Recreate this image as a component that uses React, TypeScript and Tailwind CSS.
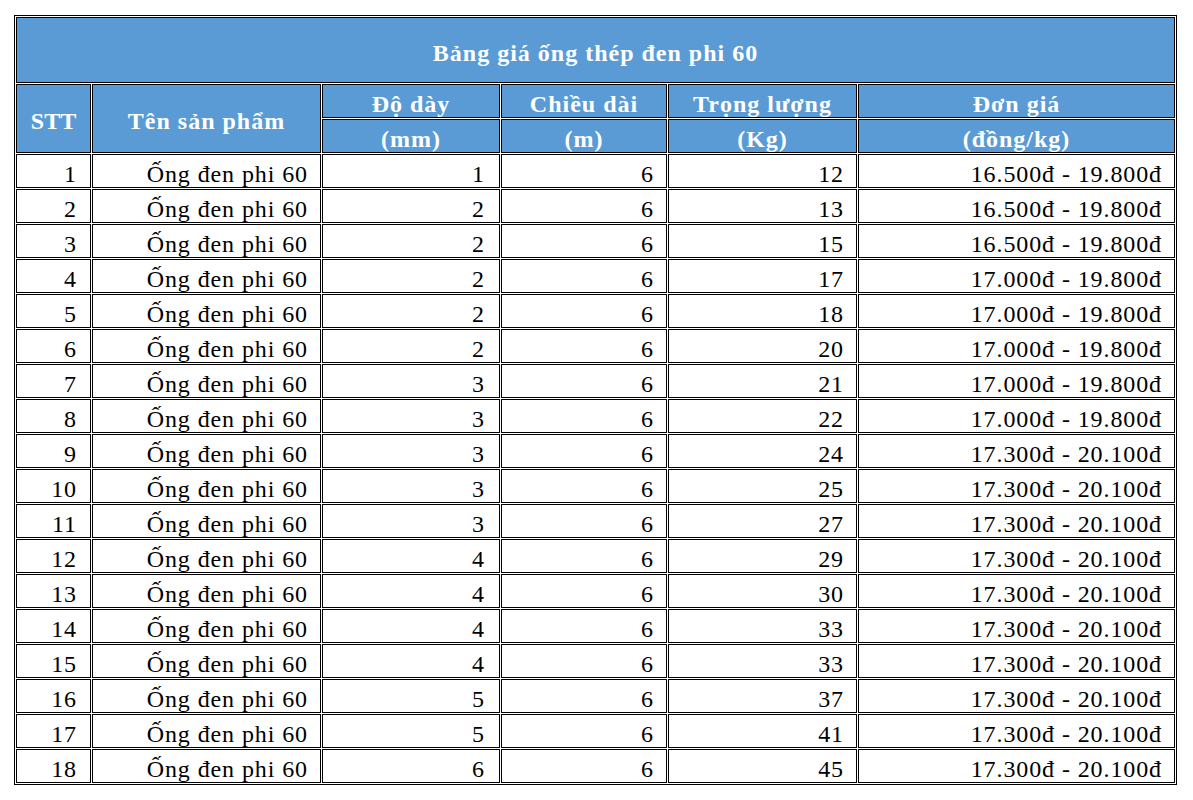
import React from "react";

const rows: [number, number, number, string][] = [
  [1, 1, 12, "16.500đ - 19.800đ"],
  [2, 2, 13, "16.500đ - 19.800đ"],
  [3, 2, 15, "16.500đ - 19.800đ"],
  [4, 2, 17, "17.000đ - 19.800đ"],
  [5, 2, 18, "17.000đ - 19.800đ"],
  [6, 2, 20, "17.000đ - 19.800đ"],
  [7, 3, 21, "17.000đ - 19.800đ"],
  [8, 3, 22, "17.000đ - 19.800đ"],
  [9, 3, 24, "17.300đ - 20.100đ"],
  [10, 3, 25, "17.300đ - 20.100đ"],
  [11, 3, 27, "17.300đ - 20.100đ"],
  [12, 4, 29, "17.300đ - 20.100đ"],
  [13, 4, 30, "17.300đ - 20.100đ"],
  [14, 4, 33, "17.300đ - 20.100đ"],
  [15, 4, 33, "17.300đ - 20.100đ"],
  [16, 5, 37, "17.300đ - 20.100đ"],
  [17, 5, 41, "17.300đ - 20.100đ"],
  [18, 6, 45, "17.300đ - 20.100đ"],
];

const th =
  "border border-black bg-[#5b9bd5] text-white font-bold text-center align-middle p-0 pt-[5px] leading-[26px] text-[24px] tracking-[1px] font-['Liberation_Serif','Times_New_Roman',serif]";
const td =
  "border border-black bg-white text-black text-right align-middle p-0 pt-[5px] pr-[12px] h-[34px] leading-[26px] text-[24px] tracking-[0.9px] font-normal font-['Liberation_Serif','Times_New_Roman',serif]";

export default function App() {
  return (
    <div className="bg-white min-h-[800px] pl-[14px] pt-[15px] font-['Liberation_Serif','Times_New_Roman',serif]">
      <table className="table-fixed border-separate border-spacing-[1px] border border-black w-[1163px] text-[24px]">
        <colgroup>
          <col className="w-[75px]" />
          <col className="w-[229px]" />
          <col className="w-[178px]" />
          <col className="w-[166px]" />
          <col className="w-[189px]" />
          <col className="w-[317px]" />
        </colgroup>
        <thead>
          <tr>
            <th colSpan={6} className={`${th} h-[66px]`}>Bảng giá ống thép đen phi 60</th>
          </tr>
          <tr>
            <th rowSpan={2} className={`${th} tracking-normal`}>STT</th>
            <th rowSpan={2} className={th}>Tên sản phẩm</th>
            <th className={`${th} h-[34px]`}>Độ dày</th>
            <th className={`${th} h-[34px]`}>Chiều dài</th>
            <th className={`${th} h-[34px]`}>Trọng lượng</th>
            <th className={`${th} h-[34px]`}>Đơn giá</th>
          </tr>
          <tr>
            <th className={`${th} h-[34px]`}>(mm)</th>
            <th className={`${th} h-[34px]`}>(m)</th>
            <th className={`${th} h-[34px]`}>(Kg)</th>
            <th className={`${th} h-[34px]`}>(đồng/kg)</th>
          </tr>
        </thead>
        <tbody>
          {rows.map(([n, d, w, p]) => (
            <tr key={n}>
              <td className={`${td} pr-[13px]`}>{n}</td>
              <td className={td}>Ống đen phi 60</td>
              <td className={`${td} pr-[14px]`}>{d}</td>
              <td className={td}>6</td>
              <td className={td}>{w}</td>
              <td className={td}>{p}</td>
            </tr>
          ))}
        </tbody>
      </table>
    </div>
  );
}
